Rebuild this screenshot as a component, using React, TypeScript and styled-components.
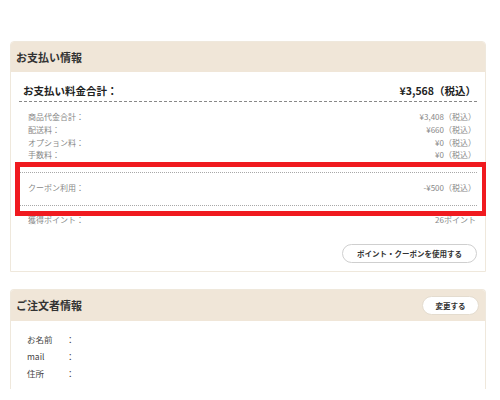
import styled, { createGlobalStyle } from 'styled-components';

const GlobalStyle = createGlobalStyle`
  body {
    margin: 0;
    background: #fff;
    font-family: 'Noto Sans CJK JP', 'Noto Sans', sans-serif;
    color: #333;
  }
`;

const Page = styled.div`
  width: 476px;
  padding: 41px 0 0 10px;
  display: flex;
  flex-direction: column;
  gap: 17px;
  height: 348px;
  overflow: hidden;
`;

const Card = styled.section<{ $open?: boolean }>`
  border: 1px solid #efe8dc;
  border-bottom: ${(p) => (p.$open ? 'none' : '1px solid #efe8dc')};
  border-radius: 4px 4px 0 0;
  background: #fff;
  flex-shrink: 0;
`;

const CardHeader = styled.div<{ $h: number }>`
  height: ${(p) => p.$h}px;
  background: #f0e6d8;
  display: flex;
  align-items: center;
  justify-content: space-between;
  padding: 0 6px 0 5px;
  border-radius: 3px 3px 0 0;
`;

const CardTitle = styled.h2`
  margin: 0;
  font-size: 11px;
  font-weight: 700;
  color: #333;
`;

const CardBody = styled.div`
  padding: 0 8px 8px 8px;
`;

const TotalRow = styled.div`
  display: flex;
  justify-content: space-between;
  align-items: flex-end;
  height: 30px;
  padding: 0 1px 3px 4px;
  box-sizing: border-box;
  border-bottom: 1px dashed #888;
  font-size: 10.5px;
  line-height: 14px;
  font-weight: 700;
  color: #222;
`;

const ItemList = styled.div`
  padding: 9px 1px 3px 9px;
`;

const Item = styled.div`
  display: flex;
  justify-content: space-between;
  font-size: 8px;
  line-height: 12.8px;
  color: #888;
`;

const CouponWrap = styled.div`
  position: relative;
  margin-top: 7px;
  border-top: 1px dotted #a8a8a8;
  border-bottom: 1px dotted #a8a8a8;
  padding: 9px 1px 10px 9px;
`;

const Highlight = styled.div`
  position: absolute;
  left: -4px;
  right: -10px;
  top: -11px;
  bottom: -11px;
  border: 5px solid #f01a1f;
  pointer-events: none;
`;

const PointsRow = styled(Item)`
  padding: 8px 1px 0 9px;
`;

const ButtonRow = styled.div`
  display: flex;
  justify-content: flex-end;
  margin-top: 17px;
`;

const PillButton = styled.button<{ $w: number; $bg?: string }>`
  width: ${(p) => p.$w}px;
  height: 19px;
  border-radius: 10px;
  border: 1px solid ${(p) => (p.$bg ? '#e4dccf' : '#cfcfcf')};
  background: ${(p) => p.$bg || '#fff'};
  font-family: inherit;
  font-size: 7.5px;
  font-weight: 700;
  color: #333;
  padding: 0;
  cursor: pointer;
`;

const InfoList = styled.div`
  padding: 10px 0 14px 16px;
`;

const InfoRow = styled.div`
  display: grid;
  grid-template-columns: 39px 1fr;
  font-size: 8.5px;
  line-height: 17px;
  color: #444;
`;

const items = [
  ['商品代金合計：', '¥3,408（税込）'],
  ['配送料：', '¥660（税込）'],
  ['オプション料：', '¥0（税込）'],
  ['手数料：', '¥0（税込）'],
];

const info = ['お名前', 'mail', '住所'];

export default function App() {
  return (
    <>
      <GlobalStyle />
      <Page>
        <Card>
          <CardHeader $h={30}>
            <CardTitle>お支払い情報</CardTitle>
          </CardHeader>
          <CardBody>
            <TotalRow>
              <span>お支払い料金合計：</span>
              <span>¥3,568（税込）</span>
            </TotalRow>
            <ItemList>
              {items.map(([label, value]) => (
                <Item key={label}>
                  <span>{label}</span>
                  <span>{value}</span>
                </Item>
              ))}
            </ItemList>
            <CouponWrap>
              <Item>
                <span>クーポン利用：</span>
                <span>-¥500（税込）</span>
              </Item>
              <Highlight />
            </CouponWrap>
            <PointsRow>
              <span>獲得ポイント：</span>
              <span>26ポイント</span>
            </PointsRow>
            <ButtonRow>
              <PillButton $w={135}>ポイント・クーポンを使用する</PillButton>
            </ButtonRow>
          </CardBody>
        </Card>
        <Card $open>
          <CardHeader $h={31}>
            <CardTitle>ご注文者情報</CardTitle>
            <PillButton $w={57} $bg="#fff">変更する</PillButton>
          </CardHeader>
          <InfoList>
            {info.map((label) => (
              <InfoRow key={label}>
                <span>{label}</span>
                <span>：</span>
              </InfoRow>
            ))}
          </InfoList>
        </Card>
      </Page>
    </>
  );
}
